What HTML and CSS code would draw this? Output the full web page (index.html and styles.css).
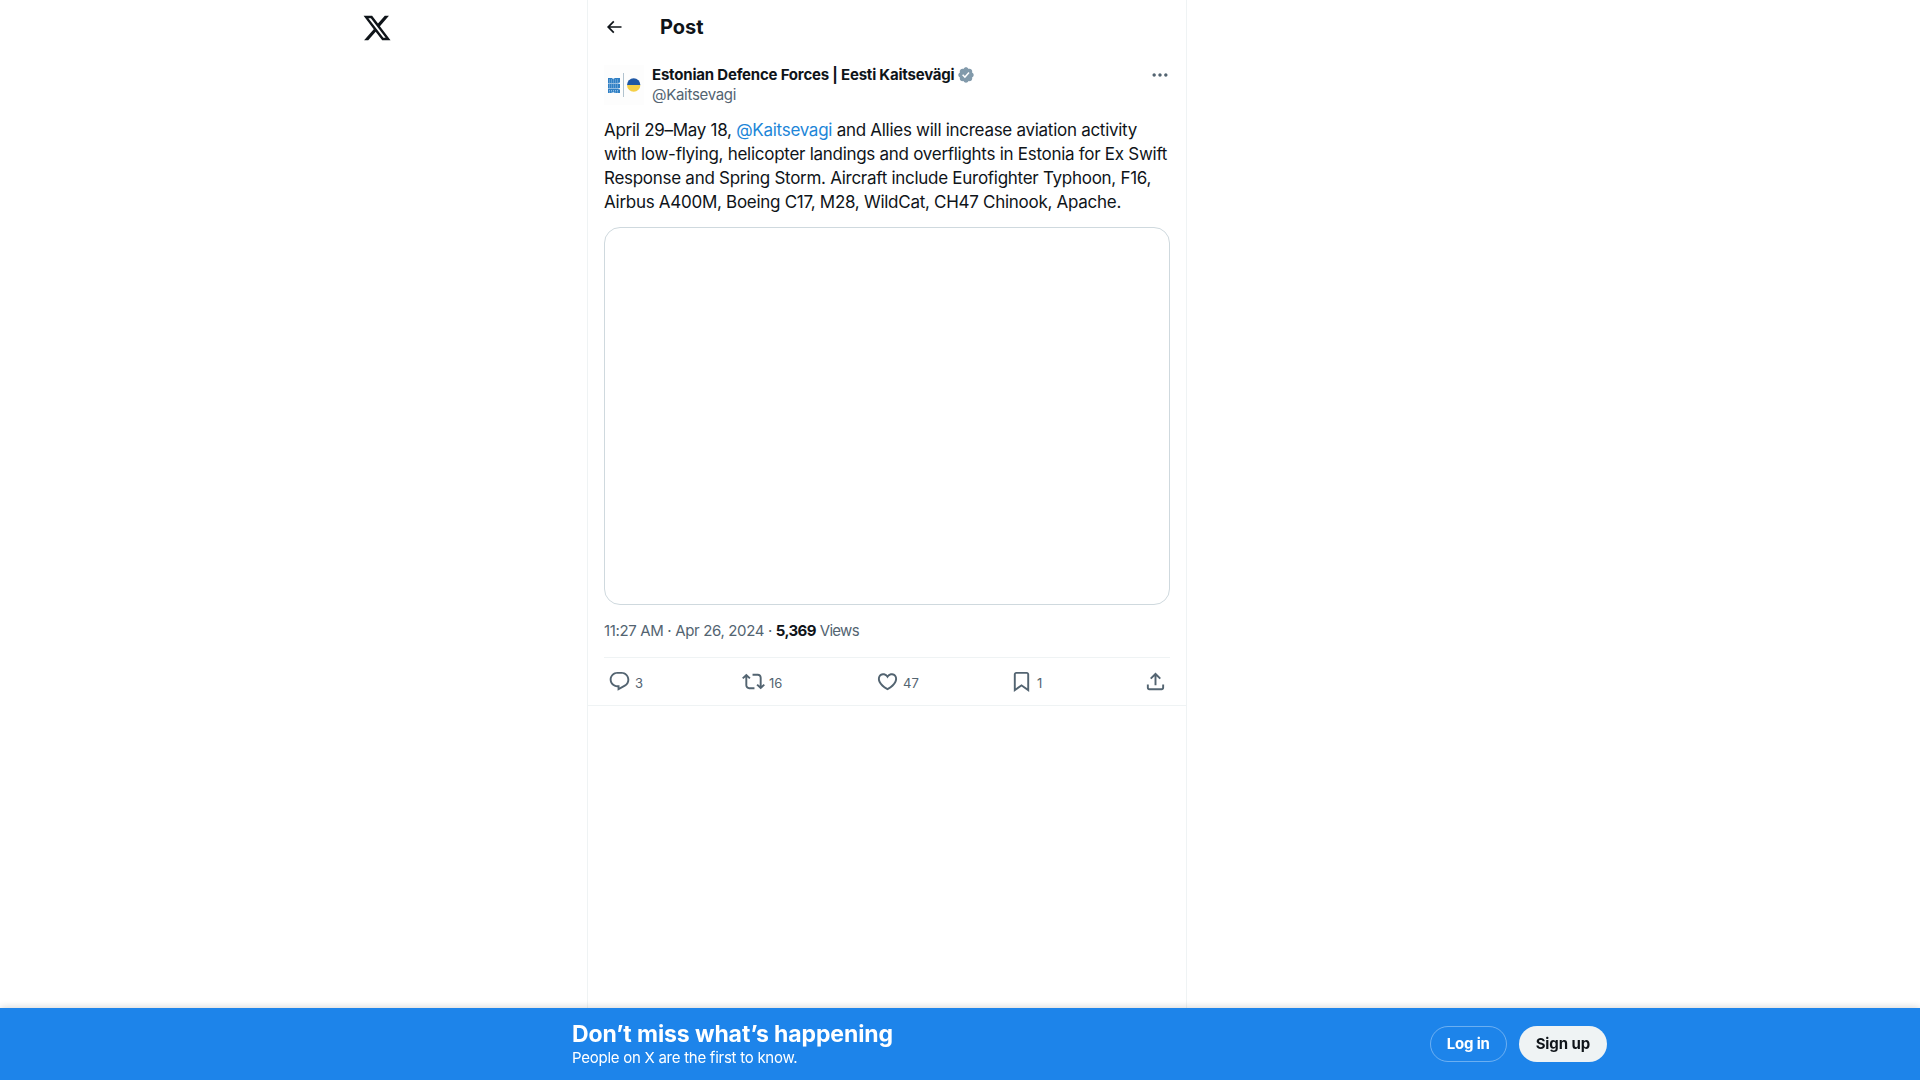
FILE: index.html
```html
<!DOCTYPE html>
<html lang="en">
<head>
  <meta charset="UTF-8" />
  <title>Estonian Defence Forces on X</title>
  <link rel="stylesheet" href="styles.css">
</head>
<body>

  <div class="layout">
    <div class="side">
      <svg class="logo" viewBox="0 0 24 24"><path d="M18.244 2.25h3.308l-7.227 8.26 8.502 11.24H16.17l-5.214-6.817L4.99 21.75H1.68l7.73-8.835L1.254 2.25H8.08l4.713 6.231zm-1.161 17.52h1.833L7.084 4.126H5.117z"/></svg>
    </div>

    <div class="column">
      <div class="topbar">
        <svg class="back" viewBox="0 0 24 24"><path d="M7.414 13l5.043 5.04-1.414 1.42L3.586 12l7.457-7.46 1.414 1.42L7.414 11H21v2H7.414z"/></svg>
        <h2>Post</h2>
      </div>

      <div class="post">
        <div class="author">
          <div class="avatar">
            <svg viewBox="0 0 40 40">
              <path d="M4 13h4l1 1 2-1h5v4.500l-2 .500H4zM4 18.500h10l2 .500v4l-2 .500H4zM4 24h10l2 .500v3.500h-5l-2-1-1 1H4z" fill="#2f7fc4"/>
              <path d="M5 15h10M5 17h9M5 20h10M5 22h10M5 25.500h10M5 27h9" stroke="#b5d6f0" stroke-width="0.7" stroke-dasharray="1 1"/>
              <rect x="19.200" y="8" width="0.8" height="24" fill="#9fb4c4"/>
              <path d="M23 20a6.700 6.700 0 0 1 13.400 0z" fill="#1f57a4"/>
              <path d="M23 20a6.700 6.700 0 0 0 13.400 0z" fill="#f5cf47"/>
            </svg>
          </div>
          <div class="names">
            <div class="name">Estonian Defence Forces | Eesti Kaitsevägi
              <svg class="badge" viewBox="0 0 24 24"><path d="M22.250 12c0-1.430-.880-2.670-2.190-3.340.460-1.390.200-2.900-.810-3.910s-2.520-1.270-3.910-.810c-.660-1.310-1.910-2.190-3.340-2.190s-2.670.880-3.330 2.190c-1.400-.460-2.910-.200-3.920.810s-1.260 2.520-.800 3.910c-1.310.670-2.200 1.910-2.200 3.340s.890 2.670 2.200 3.340c-.460 1.390-.210 2.900.800 3.910s2.520 1.260 3.910.810c.670 1.310 1.910 2.190 3.340 2.190s2.680-.880 3.340-2.190c1.390.450 2.900.200 3.910-.810s1.270-2.520.810-3.910c1.310-.670 2.190-1.910 2.190-3.340zm-11.710 4.200L6.800 12.460l1.410-1.420 2.260 2.260 4.800-5.230 1.470 1.360-6.200 6.770z"/></svg>
            </div>
            <div class="handle">@Kaitsevagi</div>
          </div>
          <svg class="more" viewBox="0 0 24 24"><path d="M3 12c0-1.100.900-2 2-2s2 .900 2 2-.900 2-2 2-2-.900-2-2zm9 2c1.100 0 2-.900 2-2s-.900-2-2-2-2 .900-2 2 .900 2 2 2zm7 0c1.100 0 2-.900 2-2s-.900-2-2-2-2 .900-2 2 .900 2 2 2z"/></svg>
        </div>

        <p class="text">April 29–May 18, <a href="#">@Kaitsevagi</a> and Allies will increase aviation activity with low-flying, helicopter landings and overflights in Estonia for Ex Swift Response and Spring Storm. Aircraft include Eurofighter Typhoon, F16, Airbus A400M, Boeing C17, M28, WildCat, CH47 Chinook, Apache.</p>

        <div class="media"></div>

        <div class="meta">11:27 AM · Apr 26, 2024 · <strong>5,369</strong> <span>Views</span></div>

        <div class="actions">
          <div class="action">
            <svg viewBox="0 0 24 24"><path d="M1.751 10c0-4.420 3.584-8 8.005-8h4.366c4.490 0 8.129 3.640 8.129 8.130 0 2.960-1.607 5.680-4.196 7.110l-8.054 4.460v-3.690h-.067c-4.490.100-8.183-3.510-8.183-8.010zm8.005-6c-3.317 0-6.005 2.690-6.005 6 0 3.370 2.770 6.080 6.138 6.010l.351-.010h1.761v2.300l5.087-2.810c1.951-1.080 3.163-3.130 3.163-5.360 0-3.390-2.744-6.130-6.129-6.130H9.756z"/></svg>
            <span>3</span>
          </div>
          <div class="action">
            <svg viewBox="0 0 24 24"><path d="M4.500 3.880l4.432 4.140-1.364 1.460L5.500 7.550V16c0 1.100.896 2 2 2H13v2H7.500c-2.209 0-4-1.790-4-4V7.550L1.432 9.480.068 8.020 4.500 3.880zM16.500 6H11V4h5.500c2.209 0 4 1.790 4 4v8.450l2.068-1.930 1.364 1.460-4.432 4.140-4.432-4.140 1.364-1.460 2.068 1.930V8c0-1.100-.896-2-2-2z"/></svg>
            <span>16</span>
          </div>
          <div class="action">
            <svg viewBox="0 0 24 24"><path d="M16.697 5.500c-1.222-.060-2.679.510-3.890 2.160l-.805 1.090-.806-1.090C9.984 6.010 8.526 5.440 7.304 5.500c-1.243.070-2.349.780-2.910 1.910-.552 1.120-.633 2.780.479 4.820 1.074 1.970 3.257 4.270 7.129 6.610 3.870-2.340 6.052-4.640 7.126-6.610 1.111-2.040 1.030-3.700.477-4.820-.561-1.130-1.666-1.840-2.908-1.910zm4.187 7.690c-1.351 2.480-4.001 5.120-8.379 7.670l-.503.300-.504-.300c-4.379-2.550-7.029-5.190-8.382-7.670-1.360-2.500-1.410-4.860-.514-6.670.887-1.790 2.647-2.910 4.601-3.010 1.651-.090 3.368.560 4.798 2.010 1.429-1.450 3.146-2.100 4.796-2.010 1.954.100 3.714 1.220 4.601 3.010.896 1.810.846 4.170-.514 6.670z"/></svg>
            <span>47</span>
          </div>
          <div class="action">
            <svg viewBox="0 0 24 24"><path d="M4 4.500C4 3.120 5.119 2 6.500 2h11C18.881 2 20 3.120 20 4.500v18.440l-8-5.710-8 5.710V4.500zM6.500 4c-.276 0-.500.220-.500.500v14.560l6-4.290 6 4.290V4.500c0-.280-.224-.500-.500-.500h-11z"/></svg>
            <span>1</span>
          </div>
          <div class="action">
            <svg viewBox="0 0 24 24"><path d="M12 2.590l5.700 5.700-1.410 1.420L13 6.410V16h-2V6.410l-3.300 3.300-1.410-1.420L12 2.590zM21 15l-.020 3.510c0 1.380-1.120 2.490-2.500 2.490H5.500C4.110 21 3 19.880 3 18.500V15h2v3.500c0 .280.220.500.500.500h12.980c.280 0 .500-.220.500-.500L19 15h2z"/></svg>
          </div>
        </div>
      </div>
    </div>
  </div>

  <!-- Logged-out banner -->
  <div class="banner">
    <div class="banner-inner">
      <div class="banner-text">
        <div class="banner-title">Don’t miss what’s happening</div>
        <div class="banner-sub">People on X are the first to know.</div>
      </div>
      <div class="banner-buttons">
        <button class="btn-login">Log in</button>
        <button class="btn-signup">Sign up</button>
      </div>
    </div>
  </div>

</body>
</html>
```

FILE: styles.css
```css
:root {
  --ink: #0f1419;
  --muted: #536471;
  --line: #eff3f4;
  --blue: #1d84ea;
}

html, body {
  height: 100%;
}

body {
  margin: 0;
  font-family: 'Inter', 'Liberation Sans', sans-serif;
  color: var(--ink);
  background: #fff;
}

.layout {
  display: flex;
  min-height: 100%;
}

.side {
  width: 587px;
  flex-shrink: 0;
  display: flex;
  justify-content: flex-end;
  padding-top: 13px;
  box-sizing: border-box;
  padding-right: 195px;
}

.logo {
  width: 30px;
  height: 30px;
  fill: var(--ink);
}

.column {
  width: 600px;
  box-sizing: border-box;
  border-left: 1px solid var(--line);
  border-right: 1px solid var(--line);
  min-height: 1080px;
}

.topbar {
  display: flex;
  align-items: center;
  height: 53px;
  padding-left: 16px;
}

.back {
  width: 20px;
  height: 20px;
  fill: var(--ink);
  margin-right: 36px;
}

.topbar h2 {
  margin: 0;
  font-size: 20px;
  font-weight: 700;
}

.post {
  padding: 12px 16px 0;
  border-bottom: 1px solid var(--line);
}

.author {
  display: flex;
  align-items: flex-start;
  height: 40px;
}

.avatar {
  width: 40px;
  height: 40px;
  margin-right: 8px;
  background: #fdfdfd;
}

.avatar svg {
  display: block;
  width: 40px;
  height: 40px;
}

.names {
  flex: 1;
}

.name {
  display: flex;
  align-items: center;
  gap: 3px;
  font-size: 15px;
  font-weight: 700;
  line-height: 20px;
  letter-spacing: -0.2px;
}

.badge {
  width: 18px;
  height: 18px;
  fill: #829aab;
}

.handle {
  font-size: 15px;
  line-height: 20px;
  letter-spacing: -0.3px;
  color: var(--muted);
}

.more {
  width: 20px;
  height: 20px;
  fill: var(--muted);
}

.text {
  margin: 13px 0 13px;
  font-size: 17px;
  line-height: 24px;
  letter-spacing: -0.28px;
}

.text a {
  color: #1d86d8;
  text-decoration: none;
}

.media {
  height: 376px;
  border: 1px solid #cfd9de;
  border-radius: 16px;
}

.meta {
  margin-top: 16px;
  height: 36px;
  font-size: 15px;
  line-height: 20px;
  letter-spacing: -0.35px;
  color: var(--muted);
}

.meta strong {
  color: var(--ink);
  letter-spacing: -0.6px;
}

.meta span {
  letter-spacing: -0.7px;
}

.actions {
  display: flex;
  align-items: center;
  height: 47px;
  border-top: 1px solid var(--line);
  padding-left: 4px;
}

.action {
  flex: 0 0 134px;
  display: flex;
  align-items: center;
  gap: 4px;
  font-size: 13px;
  color: var(--muted);
}

.action svg {
  width: 23px;
  height: 23px;
  fill: var(--muted);
}

.action span {
  margin-top: 2px;
}

.banner {
  position: fixed;
  left: 0;
  right: 0;
  bottom: 0;
  height: 72px;
  background: var(--blue);
  box-shadow: 0 0 8px rgba(0, 0, 0, 0.2);
}

.banner-inner {
  width: 1035px;
  height: 100%;
  margin-left: 572px;
  display: flex;
  justify-content: space-between;
  align-items: center;
}

.banner-title {
  font-size: 23px;
  font-weight: 700;
  line-height: 28px;
  letter-spacing: -0.1px;
  color: #fff;
}

.banner-sub {
  font-size: 15px;
  line-height: 20px;
  letter-spacing: -0.26px;
  color: #fff;
}

.banner-buttons {
  display: flex;
  gap: 12px;
}

.banner-buttons button {
  height: 36px;
  padding: 0 16px 2px;
  border-radius: 18px;
  font-family: inherit;
  font-size: 15px;
  font-weight: 700;
  cursor: pointer;
}

.btn-login {
  background: transparent;
  color: #fff;
  border: 1px solid rgba(255, 255, 255, 0.35);
  letter-spacing: -0.2px;
}

.banner-buttons .btn-signup {
  padding: 0 17px 2px;
  background: #eff3f4;
  color: var(--ink);
  border: none;
  letter-spacing: -0.1px;
}
```
